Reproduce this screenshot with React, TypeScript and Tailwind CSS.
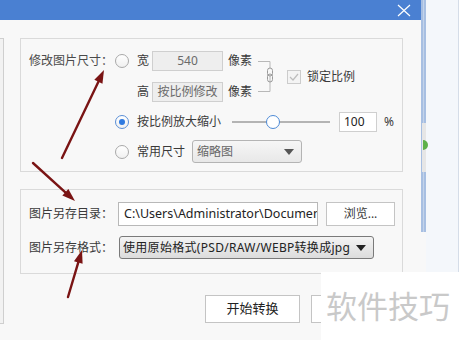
import React from "react";

const font = "font-['Noto_Sans','Noto_Sans_CJK_SC',sans-serif]";

function Radio({ checked }: { checked?: boolean }) {
  return (
    <div
      className={`flex h-[14px] w-[14px] shrink-0 items-center justify-center rounded-full border bg-gradient-to-b from-white to-[#f0f0f0] ${
        checked ? "border-[#5b8fd6]" : "border-[#a9a9a9]"
      }`}
    >
      {checked && <div className="h-[6px] w-[6px] rounded-full bg-[#2f7ae0]" />}
    </div>
  );
}

function Arrow({ x1, y1, x2, y2 }: { x1: number; y1: number; x2: number; y2: number }) {
  const dx = x2 - x1;
  const dy = y2 - y1;
  const len = Math.hypot(dx, dy);
  const ux = dx / len;
  const uy = dy / len;
  const bx = x2 - ux * 13;
  const by = y2 - uy * 13;
  const px = -uy * 4.5;
  const py = ux * 4.5;
  return (
    <g>
      <line x1={x1} y1={y1} x2={bx} y2={by} stroke="#7a1414" strokeWidth={2.4} strokeLinecap="round" />
      <polygon points={`${x2},${y2} ${bx + px},${by + py} ${bx - px},${by - py}`} fill="#7a1414" />
    </g>
  );
}

export default function App() {
  return (
    <div className={`relative flex h-[340px] w-[459px] overflow-hidden bg-[#f8f8f8] text-[12px] text-[#3a3a3a] ${font}`}>
      <div className="flex w-[421px] flex-col">
        {/* title bar */}
        <div className="flex h-[20px] items-center justify-end bg-[#4a80d2] pr-[10px]">
          <svg width="14" height="13" viewBox="0 0 14 13">
            <path d="M1 1 L13 12 M13 1 L1 12" stroke="#fff" strokeWidth="1.2" fill="none" />
          </svg>
        </div>

        <div className="flex flex-1">
          <div className="mt-[18px] h-[286px] w-[4px] border-y border-r border-[#cfcfcf] bg-[#f2f2f2]" />

          <div className="ml-[16px] flex flex-col pt-[18px]">
            {/* group 1 */}
            <div className="flex w-[383px] border border-[#dadada] pb-[8px] pl-[8px] pt-[12px]">
              <div className="w-[86px] leading-[20px] text-[#4a4a4a]">修改图片尺寸：</div>
              <div className="flex flex-col">
                <div className="flex">
                  <div className="flex flex-col gap-[11px]">
                    <div className="flex h-[20px] items-center">
                      <Radio />
                      <span className="ml-[8px] w-[15px]">宽</span>
                      <div className="flex h-[20px] w-[71px] items-center justify-center border border-[#cfcfcf] bg-[#eeeeee] text-[#6a6a6a]">
                        540
                      </div>
                      <span className="ml-[5px]">像素</span>
                    </div>
                    <div className="flex h-[20px] items-center">
                      <span className="ml-[22px] w-[15px]">高</span>
                      <div className="flex h-[20px] w-[71px] items-center justify-center border border-[#cfcfcf] bg-[#eeeeee] text-[#6a6a6a]">
                        按比例修改
                      </div>
                      <span className="ml-[5px]">像素</span>
                    </div>
                  </div>
                  <svg width="20" height="42" viewBox="0 0 20 42" className="ml-[5px] mt-[9px]">
                    <path d="M1 1.5 H13 V31.5 H1" stroke="#b8b8b8" strokeWidth="1" fill="none" />
                    <rect x="10.5" y="8" width="5" height="8" rx="2.5" stroke="#9a9a9a" fill="#f8f8f8" />
                    <rect x="10.5" y="14" width="5" height="8" rx="2.5" stroke="#9a9a9a" fill="none" />
                  </svg>
                  <div className="ml-[10px] mt-[16px] flex h-[20px] items-center">
                    <div className="flex h-[14px] w-[14px] items-center justify-center border border-[#cccccc] bg-[#f4f4f4]">
                      <svg width="10" height="8" viewBox="0 0 10 8">
                        <path d="M1 4 L4 7 L9 1" stroke="#bdbdbd" strokeWidth="1.2" fill="none" />
                      </svg>
                    </div>
                    <span className="ml-[6px]">锁定比例</span>
                  </div>
                </div>

                <div className="mt-[10px] flex h-[20px] items-center">
                  <Radio checked />
                  <span className="ml-[8px] w-[95px]">按比例放大缩小</span>
                  <div className="relative flex h-[20px] w-[98px] items-center">
                    <div className="h-[2px] w-full bg-[#b4b4b4]" />
                    <div className="absolute left-[34px] h-[14px] w-[14px] rounded-full border border-[#4d8ad6] bg-white" />
                  </div>
                  <div className="ml-[9px] flex h-[20px] w-[38px] items-center border border-[#cfcfcf] bg-white pl-[4px] text-[#222]">
                    100
                  </div>
                  <span className="ml-[7px]">%</span>
                </div>

                <div className="mt-[8px] flex h-[23px] items-center">
                  <Radio />
                  <span className="ml-[8px] w-[55px]">常用尺寸</span>
                  <div className="flex h-[23px] w-[110px] items-center justify-between rounded-[3px] border border-[#b4b4b4] bg-gradient-to-b from-[#f6f6f6] to-[#e8e8e8] pl-[4px] pr-[7px] text-[#666]">
                    <span>缩略图</span>
                    <svg width="10" height="6" viewBox="0 0 10 6">
                      <path d="M0 0 H10 L5 6 Z" fill="#555" />
                    </svg>
                  </div>
                </div>
              </div>
            </div>

            {/* group 2 */}
            <div className="mt-[17px] flex w-[383px] flex-col border border-[#dadada] pb-[14px] pl-[8px] pt-[12px]">
              <div className="flex h-[24px] items-center">
                <span className="w-[89px]">图片另存目录：</span>
                <div className="flex h-[24px] w-[200px] items-center overflow-hidden whitespace-nowrap border border-[#b8b8b8] bg-white pl-[5px] text-[12.5px] text-[#222]">
                  C:\Users\Administrator\Documen
                </div>
                <div className="ml-[8px] flex h-[24px] w-[69px] items-center justify-center border border-[#c4c4c4] bg-white">
                  浏览...
                </div>
              </div>
              <div className="mt-[10px] flex h-[23px] items-center">
                <span className="w-[90px]">图片另存格式：</span>
                <div className="flex h-[23px] w-[255px] items-center rounded-[3px] border border-[#7a7a7a] bg-gradient-to-b from-[#f4f4f4] to-[#dcdcdc] pl-[3px] pr-[7px] text-[#222]">
                  <span className="w-[234px] overflow-hidden whitespace-nowrap tracking-[0.3px]">使用原始格式(PSD/RAW/WEBP转换成jpg</span>
                  <svg width="10" height="6" viewBox="0 0 10 6" className="ml-auto">
                    <path d="M0 0 H10 L5 6 Z" fill="#222" />
                  </svg>
                </div>
              </div>
            </div>

            {/* buttons */}
            <div className="mt-[21px] flex gap-[11px] pl-[185px]">
              <div className="flex h-[28px] w-[95px] items-center justify-center border border-[#c4c4c4] bg-white text-[13px] text-[#222]">
                开始转换
              </div>
              <div className="flex h-[28px] w-[95px] items-center justify-center border border-[#c4c4c4] bg-white" />
            </div>
          </div>
        </div>
      </div>

      {/* right neighbouring window */}
      <div className="relative flex h-full flex-1">
        <div className="h-[232px] w-[5px] border-l-[2px] border-r-[2px] border-[#a7bfe2] bg-[#c3d3ea]" />
        <div className="flex-1 border-r border-[#d5dde8] bg-[#f4f7fb]" />
        <div className="absolute left-[1px] top-[123px] h-[49px] w-[4px] bg-[#e6e6e6]" />
        <div className="absolute left-[2px] top-[140px] h-[10px] w-[5px] rounded-r-full bg-[#5db04a]" />
      </div>

      {/* annotation arrows */}
      <svg className="pointer-events-none absolute left-0 top-0" width="459" height="340">
        <Arrow x1={62} y1={158} x2={104} y2={70} />
        <Arrow x1={33} y1={163} x2={75} y2={201} />
        <Arrow x1={68} y1={297} x2={82} y2={250} />
      </svg>

      {/* watermark */}
      <div className="absolute left-[321px] top-[272px] flex h-[68px] w-[138px] items-center bg-white pl-[5px] text-[31px] text-[#c9c9c9]">
        软件技巧
      </div>
    </div>
  );
}
